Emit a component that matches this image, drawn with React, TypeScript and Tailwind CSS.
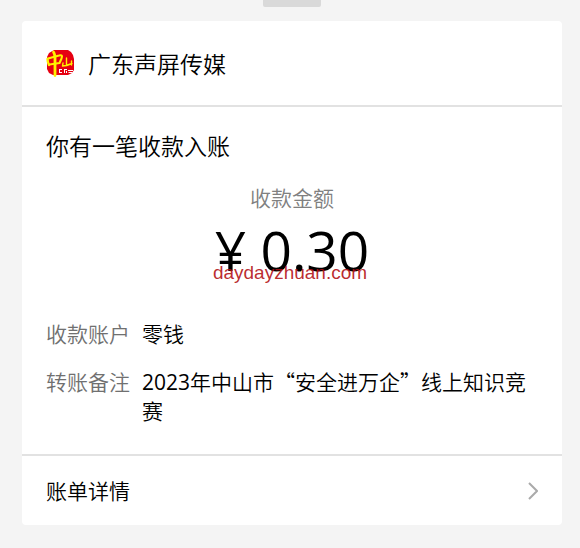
type Detail = {
  label: string
  number?: string
  text: string
}

const details: Detail[] = [
  { label: '收款账户', text: '零钱' },
  { label: '转账备注', number: '2023', text: '年中山市“安全进万企”线上知识竞赛' },
]

function Logo() {
  return (
    <svg viewBox="0 0 28 28" className="h-7 w-7 shrink-0" aria-hidden="true">
      <path
        d="M8 1h14l3 2 2 3 1 4v11l-2 3-4 2H7l-4-2-2-4V8l2-4z"
        fill="#e60012"
      />
      <g fill="none" stroke="#fff100" strokeLinecap="round" strokeLinejoin="round">
        <path d="M1.5 10c0 3 .5 4 1.5 6" strokeWidth="2.4" />
        <path d="M2 9.500l11-3c3-1 3.500.5 2.500 3L13.500 14 3.500 15.500" strokeWidth="2.1" />
        <path d="M7.500 3c1.500 2 1.500 4 1.500 7v16.500" strokeWidth="2.8" />
        <path d="M20.500 9v7M17 14l-.5 3c3 0 6-1 9.500-2.500M25.500 12v4" strokeWidth="1.4" />
      </g>
      <g fill="none" stroke="#fff" strokeWidth="1">
        <path d="M13 20.500h3M13.500 20v4M13 23.500h3M18 20.500h3M18.500 21v3M20.500 22v2M22 21.500h5M22.500 23.500h4" />
      </g>
    </svg>
  )
}

function Chevron() {
  return (
    <svg viewBox="0 0 10 18" className="h-[18px] w-[10px]" aria-hidden="true">
      <path d="M1 1l8 8-8 8" fill="none" stroke="#aaaaaa" strokeWidth="2" />
    </svg>
  )
}

export default function App() {
  return (
    <main className="min-h-screen bg-[#f4f4f4] pb-6 font-['Noto_Sans_CJK_SC',sans-serif] font-[350] text-black">
      <div className="pr-[18px] pl-[22px]">
        <div className="mx-auto h-[7px] w-[58px] rounded-b-xs bg-[#d9d9d9]" />

        <article className="mt-3.5 rounded-sm bg-white">
          <header className="flex items-center gap-3.5 border-b-2 border-[#e2e2e2] px-6 py-6">
            <Logo />
            <h1 className="text-[23px] leading-9">广东声屏传媒</h1>
          </header>

          <section className="px-6 pt-[22px] pb-[30px]">
            <h2 className="text-[23px] leading-8">你有一笔收款入账</h2>

            <div className="relative mt-5 text-center">
              <p className="text-[21px] leading-8 text-[#808080]">收款金额</p>
              <p className="font-['Open_Sans',sans-serif] text-[55px] leading-[74px] font-normal">¥ 0.30</p>
              <span className="absolute inset-x-0 bottom-0.5 mr-1 font-['Liberation_Sans',sans-serif] text-[19px] leading-6 font-normal text-[#b30f14]/90">
                daydayzhuan.com
              </span>
            </div>

            <dl className="mt-8 flex flex-col gap-5 text-[21px] leading-7">
              {details.map((item) => (
                <div key={item.label} className="flex gap-3">
                  <dt className="shrink-0 text-[#707070]">{item.label}</dt>
                  <dd>
                    {item.number ? (
                      <span className="font-['Open_Sans',sans-serif] font-normal">{item.number}</span>
                    ) : null}
                    {item.text}
                  </dd>
                </div>
              ))}
            </dl>
          </section>

          <a
            href="#bill"
            className="flex items-center justify-between border-t-2 border-[#e2e2e2] px-6 py-[18px] text-[21px] leading-[33px]"
          >
            账单详情
            <Chevron />
          </a>
        </article>
      </div>
    </main>
  )
}
